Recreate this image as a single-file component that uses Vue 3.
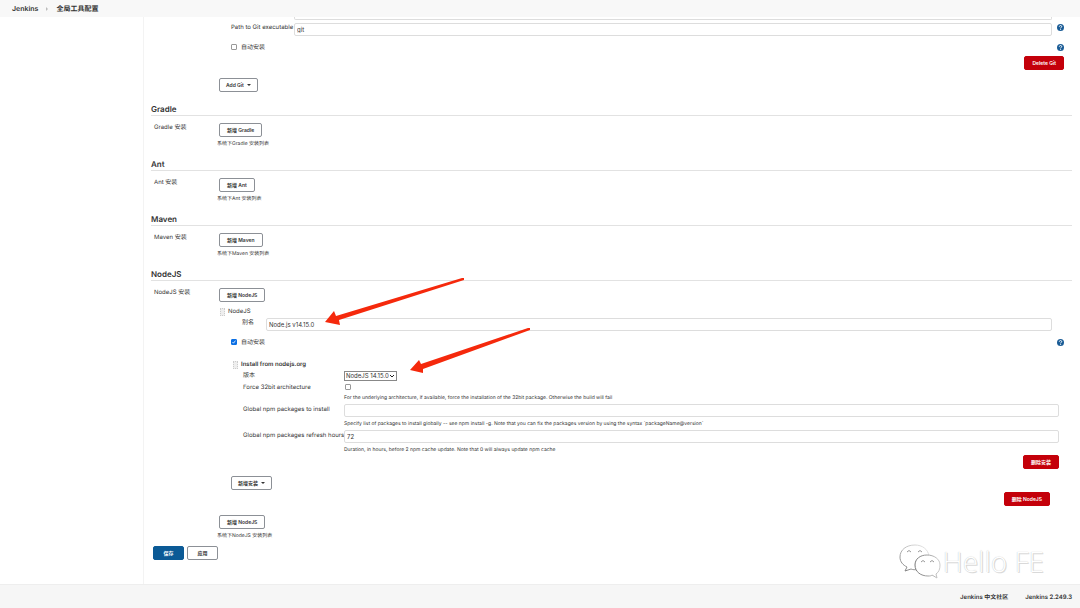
<script setup>
import { ref } from 'vue'

const tools = [
  { name: 'Gradle' },
  { name: 'Ant' },
  { name: 'Maven' },
]
const gitPath = ref('git')
const gitAuto = ref(false)
const nodeName = ref('Node.js v14.15.0')
const nodeAuto = ref(true)
const version = ref('NodeJS 14.15.0')
const force32 = ref(false)
const packages = ref('')
const hours = ref('72')
</script>

<template>
  <div class="page">
    <header class="crumbs">
      <a href="#">Jenkins</a>
      <svg class="sep" viewBox="0 0 4 6"><path d="M1 1 L3 3 L1 5 Z" /></svg>
      <a href="#">全局工具配置</a>
    </header>

    <div class="body">
      <aside class="side"></aside>
      <main class="main">
        <div class="git">
          <div class="clipped"></div>
          <div class="git-path">
            <label for="git-path">Path to Git executable</label>
            <input id="git-path" v-model="gitPath" class="text" type="text" />
            <button class="help" type="button" aria-label="Help">
              <svg viewBox="0 0 14 14"><circle cx="7" cy="7" r="7" /><path d="M4.6 5.3 C4.8 2.2 9.6 2.4 9.4 5.2 C9.3 6.7 7.2 6.9 7.2 8.8 M7.2 10.2 V11.8" /></svg>
            </button>
          </div>
          <div class="auto">
            <input id="git-auto" v-model="gitAuto" type="checkbox" />
            <label for="git-auto">自动安装</label>
            <button class="help" type="button" aria-label="Help">
              <svg viewBox="0 0 14 14"><circle cx="7" cy="7" r="7" /><path d="M4.6 5.3 C4.8 2.2 9.6 2.4 9.4 5.2 C9.3 6.7 7.2 6.9 7.2 8.8 M7.2 10.2 V11.8" /></svg>
            </button>
          </div>
          <div class="git-delete"><button class="btn danger" type="button">Delete Git</button></div>
          <div class="git-add"><button class="btn menu" type="button">Add Git <i class="caret"></i></button></div>
        </div>

        <section v-for="tool in tools" :key="tool.name" class="tool">
          <h2>{{ tool.name }}</h2>
          <div class="setting">
            <div class="name">{{ tool.name }} 安装</div>
            <div class="value">
              <button class="btn" type="button">新增 {{ tool.name }}</button>
              <p class="note list">系统下{{ tool.name }} 安装列表</p>
            </div>
          </div>
        </section>

        <section class="tool">
          <h2>NodeJS</h2>
          <div class="setting">
            <div class="name">NodeJS 安装</div>
            <div class="value">
              <button class="btn" type="button">新增 NodeJS</button>
              <div class="drag"><i class="handle"></i>NodeJS</div>
              <div class="alias">
                <label for="node-name">别名</label>
                <input id="node-name" v-model="nodeName" class="text" type="text" />
              </div>
              <div class="auto node-auto">
                <input id="node-auto" v-model="nodeAuto" type="checkbox" />
                <label for="node-auto">自动安装</label>
                <button class="help" type="button" aria-label="Help">
                  <svg viewBox="0 0 14 14"><circle cx="7" cy="7" r="7" /><path d="M4.6 5.3 C4.8 2.2 9.6 2.4 9.4 5.2 C9.3 6.7 7.2 6.9 7.2 8.8 M7.2 10.2 V11.8" /></svg>
                </button>
              </div>

              <div class="installer">
                <div class="drag strong"><i class="handle"></i>Install from nodejs.org</div>
                <div class="fields">
                  <label for="version">版本</label>
                  <div class="cell">
                    <span class="select">
                      <select id="version" v-model="version"><option>NodeJS 14.15.0</option></select>
                      <svg viewBox="0 0 6 4"><path d="M1 1 L3 3 L5 1" /></svg>
                    </span>
                  </div>
                  <label for="force32">Force 32bit architecture</label>
                  <div class="cell force">
                    <input id="force32" v-model="force32" type="checkbox" />
                    <p class="note">For the underlying architecture, if available, force the installation of the 32bit package. Otherwise the build will fail</p>
                  </div>
                  <label for="packages" class="tall">Global npm packages to install</label>
                  <div class="cell">
                    <input id="packages" v-model="packages" class="text" type="text" />
                    <p class="note">Specify list of packages to install globally -- see npm install -g. Note that you can fix the packages version by using the syntax `packageName@version`</p>
                  </div>
                  <label for="hours" class="tall">Global npm packages refresh hours</label>
                  <div class="cell">
                    <input id="hours" v-model="hours" class="text" type="text" />
                    <p class="note">Duration, in hours, before 2 npm cache update. Note that 0 will always update npm cache</p>
                  </div>
                </div>
                <div class="right"><button class="btn danger" type="button">删除安装</button></div>
              </div>

              <div class="add-installer"><button class="btn menu" type="button">新增安装 <i class="caret"></i></button></div>
              <div class="right node-delete"><button class="btn danger" type="button">删除 NodeJS</button></div>
              <button class="btn" type="button">新增 NodeJS</button>
              <p class="note list">系统下NodeJS 安装列表</p>
            </div>
          </div>
        </section>

        <div class="actions">
          <button class="btn primary" type="button">保存</button>
          <button class="btn" type="button">应用</button>
        </div>
      </main>
    </div>

    <footer class="foot">
      <a href="#">Jenkins 中文社区</a>
      <a href="#">Jenkins 2.249.3</a>
    </footer>

    <svg class="arrow first" viewBox="0 0 140 48" aria-hidden="true">
      <path d="M0 44 L9 33 L11 38 L137 0 L139 0 L139 2 L14 42 L15 47 Z" />
    </svg>
    <svg class="arrow second" viewBox="0 0 122 46" aria-hidden="true">
      <path d="M0 42 L9 32 L11 36 L118 0 L120 0 L120 2 L13 41 L13 45 Z" />
    </svg>

    <div class="mark">
      <svg viewBox="0 0 42 36" aria-hidden="true">
        <defs>
          <linearGradient id="fade" x1="1" y1="0" x2="0" y2="1">
            <stop offset="0" stop-color="#eee" />
            <stop offset="0.5" stop-color="#bbb" />
            <stop offset="1" stop-color="#777" />
          </linearGradient>
          <linearGradient id="fade-small" x1="1" y1="0" x2="0" y2="0">
            <stop offset="0" stop-color="#ccc" />
            <stop offset="1" stop-color="#777" />
          </linearGradient>
        </defs>
        <path stroke="url(#fade)" d="M16 1 C7 1 1 6 1 13 C1 18 4 21 8 23 L6 27 L12 25 C14 26 18 26 20 25 C29 24 31 18 30 12 C29 5 23 1 16 1 Z" />
        <path stroke="url(#fade-small)" d="M28 11 C21 11 16 15 16 21 C16 28 22 32 29 32 C31 32 32 32 33 31 L38 34 L37 30 C40 28 41 25 41 21 C41 15 35 11 28 11 Z" />
        <path stroke="#999" d="M8 8 q2 -3 4 0 M19 8 q2 -3 4 0 M22 18 q2 -3 4 0 M31 18 q2 -3 4 0" />
      </svg>
      <span>Hello FE</span>
    </div>
  </div>
</template>

<style>
body {
  margin: 0;
  background: #fff;
}
</style>

<style scoped>
.page {
  position: relative;
  display: flex;
  flex-direction: column;
  min-height: 100vh;
  overflow: hidden;
  font: 6px/8px Inter, "Noto Sans CJK SC", sans-serif;
  text-rendering: geometricPrecision;
  color: #333;
}
.page * { box-sizing: border-box; }
a { color: inherit; text-decoration: none; }
input, button, select { font: inherit; color: inherit; margin: 0; }
.crumbs {
  display: flex;
  align-items: center;
  gap: 7px;
  height: 17px;
  padding: 0 12px;
  background: #f8f8f8;
  font-size: 7px;
  font-weight: 600;
}
.sep { width: 4px; height: 6px; fill: #bbb; }
.body { display: flex; flex: 1; }
.side { width: 144px; flex: none; border-right: 1px solid #f3f3f3; }
.main { flex: 1; min-width: 0; padding: 0 8px 24px 7px; }

.text {
  display: block;
  width: 100%;
  height: 13px;
  padding: 0 2px;
  border: 1px solid #ddd;
  border-radius: 2px;
  background: #fff;
  outline: none;
}
input[type="checkbox"] {
  appearance: none;
  display: block;
  flex: none;
  width: 6px;
  height: 6px;
  border: 1px solid #999;
  border-radius: 1px;
  background: #fff;
}
input[type="checkbox"]:checked {
  border-color: #0b6fe4;
  background: #0b6fe4 url("data:image/svg+xml,%3Csvg xmlns='http://www.w3.org/2000/svg' viewBox='0 0 4 4'%3E%3Cpath d='M.5 2l1 1.2L3.5.6' fill='none' stroke='white' stroke-width='.8'/%3E%3C/svg%3E") center / 100%;
}
.help {
  flex: none;
  width: 7px;
  height: 7px;
  padding: 0;
  border: 0;
  background: none;
}
.help svg { display: block; width: 7px; height: 7px; }
.help circle { fill: #1a5c96; }
.help path { fill: none; stroke: #fff; stroke-width: 2; }

.btn {
  display: inline-flex;
  align-items: center;
  justify-content: center;
  height: 14px;
  padding: 0 7px;
  border: 1px solid #8c9096;
  border-radius: 2px;
  background: #fff;
  font-size: 5px;
  font-weight: 600;
  white-space: nowrap;
  vertical-align: top;
}
.menu { padding: 0 6px; }
.danger { border-color: #c4000a; background: #c4000a; color: #fff; }
.primary { border-color: #0b5a96; background: #0b5a96; color: #fff; }
.caret {
  margin-left: 3px;
  border: 2px solid transparent;
  border-top-color: #333;
  border-bottom: 0;
}

.git { height: 85px; }
.clipped {
  height: 3px;
  margin: 0 20px 0 143px;
  border: 1px solid #ddd;
  border-top: 0;
  border-radius: 0 0 2px 2px;
}
.git-path {
  display: grid;
  grid-template-columns: 63px 1fr 7px;
  padding: 3px 8px 0 80px;
}
.git-path label, .git-path .help { margin-top: 1px; white-space: nowrap; }
.git-path .text { width: auto; margin-right: 5px; }
.auto { display: flex; align-items: center; gap: 4px; height: 8px; }
.auto label { flex: 1; padding-top: 2px; }
.git .auto { margin: 7px 8px 0 80px; }
.git-delete { display: flex; justify-content: flex-end; padding: 5px 8px 0 0; }
.git-add { padding: 8px 0 0 68px; }

.tool { min-height: 55px; }
h2 {
  margin: 0;
  height: 14px;
  border-bottom: 1px solid #e2e2e2;
  font-size: 8px;
  line-height: 14px;
  font-weight: 600;
}
.setting { display: flex; padding-top: 7px; }
.name { width: 68px; flex: none; padding: 1px 0 0 3px; }
.value { flex: 1; min-width: 0; }
.note { margin: 0; font-size: 5px; line-height: 8px; }
.list { margin: 3px 0 0 -2px; }
.drag { display: flex; align-items: center; gap: 3px; height: 8px; margin: 6px 0 0 1px; }
.handle { width: 5px; height: 8px; border: 1px dotted #ccc; background: #eee; }
.strong { font-weight: 600; }
.alias { display: grid; grid-template-columns: 24px 1fr; padding: 2px 20px 0 23px; }
.alias label { padding-top: 1px; }
.node-auto { margin: 7px 8px 0 12px; }
.installer { margin: 15px 13px 0 13px; }
.fields {
  display: grid;
  grid-template-columns: 101px 1fr;
  row-gap: 2px;
  margin: 2px 0 1px 11px;
}
.fields label { padding-top: 1px; white-space: nowrap; }
.fields .tall { padding-top: 2px; }
.cell .note { margin-top: 3px; }
.force input { margin: 1px 0 0 1px; }
.force .note { margin-top: 4px; }
.select { position: relative; display: block; width: 53px; height: 10px; }
.select select {
  appearance: none;
  display: block;
  width: 100%;
  height: 10px;
  padding: 0 1px;
  border: 1px solid #888;
  border-radius: 0;
  background: #fff;
}
.select svg { position: absolute; right: 2px; top: 3px; width: 6px; height: 4px; fill: none; stroke: #222; }
.right { display: flex; justify-content: flex-end; }
.add-installer { padding: 7px 0 0 12px; }
.node-delete { padding: 2px 22px 9px 0; }
.actions { display: flex; gap: 3px; padding: 6px 0 0 2px; }
.actions .btn { width: 31px; }

.foot {
  display: flex;
  justify-content: flex-end;
  align-items: center;
  gap: 17px;
  height: 24px;
  padding: 2px 8px 0;
  border-top: 1px solid #eee;
  background: #f6f6f6;
  font-weight: 600;
}

.arrow { position: absolute; fill: #f5290c; }
.first { left: 325px; top: 278px; width: 140px; height: 48px; }
.second { left: 410px; top: 328px; width: 122px; height: 46px; }
.mark {
  position: absolute;
  right: 36px;
  bottom: 28px;
  display: flex;
  align-items: center;
  gap: 2px;
  font: 28px/36px "Open Sans", sans-serif;
  font-weight: 300;
  color: #fff;
  text-shadow: 0 0 1px #bbb, 1px 1px 0 #ddd;
}
.mark svg { width: 42px; height: 36px; fill: #fff; }
</style>
